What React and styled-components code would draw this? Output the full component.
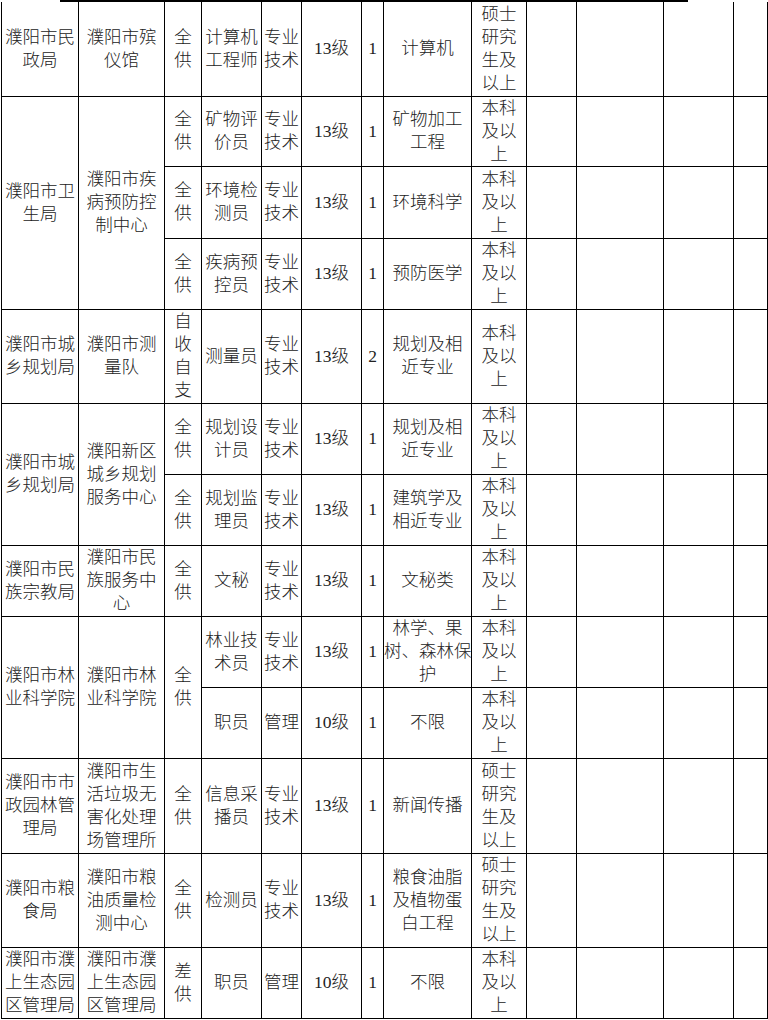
import React from "react";
import styled, { createGlobalStyle } from "styled-components";

const GlobalStyle = createGlobalStyle`
  html, body {
    margin: 0;
    padding: 0;
    background: #fff;
  }
  body {
    font-family: "Liberation Serif", "Noto Sans CJK SC", serif;
    color: #222;
  }
`;

const cols = [77, 86, 37, 60, 40, 60, 22, 88, 55, 50, 87, 70, 34];

const BK = "本科\n及以\n上";
const SS = "硕士\n研究\n生及\n以上";
const ZJ = "专业\n技术";

// [text, rowSpan]
const rows = [
  {
    h: 94,
    cells: ["濮阳市民\n政局", "濮阳市殡\n仪馆", "全\n供", "计算机\n工程师", ZJ, "13级", "1", "计算机", SS],
  },
  {
    h: 70,
    cells: [
      ["濮阳市卫\n生局", 3],
      ["濮阳市疾\n病预防控\n制中心", 3],
      "全\n供", "矿物评\n价员", ZJ, "13级", "1", "矿物加工\n工程", BK,
    ],
  },
  { h: 72, cells: ["全\n供", "环境检\n测员", ZJ, "13级", "1", "环境科学", BK] },
  { h: 71, cells: ["全\n供", "疾病预\n控员", ZJ, "13级", "1", "预防医学", BK] },
  {
    h: 94,
    cells: ["濮阳市城\n乡规划局", "濮阳市测\n量队", "自\n收\n自\n支", "测量员", ZJ, "13级", "2", "规划及相\n近专业", BK],
  },
  {
    h: 71,
    cells: [
      ["濮阳市城\n乡规划局", 2],
      ["濮阳新区\n城乡规划\n服务中心", 2],
      "全\n供", "规划设\n计员", ZJ, "13级", "1", "规划及相\n近专业", BK,
    ],
  },
  { h: 71, cells: ["全\n供", "规划监\n理员", ZJ, "13级", "1", "建筑学及\n相近专业", BK] },
  {
    h: 71,
    cells: ["濮阳市民\n族宗教局", "濮阳市民\n族服务中\n心", "全\n供", "文秘", ZJ, "13级", "1", "文秘类", BK],
  },
  {
    h: 71,
    cells: [
      ["濮阳市林\n业科学院", 2],
      ["濮阳市林\n业科学院", 2],
      ["全\n供", 2],
      "林业技\n术员", ZJ, "13级", "1", "林学、果\n树、森林保\n护", BK,
    ],
  },
  { h: 71, cells: ["职员", "管理", "10级", "1", "不限", BK] },
  {
    h: 95,
    cells: [
      "濮阳市市\n政园林管\n理局",
      "濮阳市生\n活垃圾无\n害化处理\n场管理所",
      "全\n供", "信息采\n播员", ZJ, "13级", "1", "新闻传播", SS,
    ],
  },
  {
    h: 94,
    cells: ["濮阳市粮\n食局", "濮阳市粮\n油质量检\n测中心", "全\n供", "检测员", ZJ, "13级", "1", "粮食油脂\n及植物蛋\n白工程", SS],
  },
  {
    h: 71,
    cells: ["濮阳市濮\n上生态园\n区管理局", "濮阳市濮\n上生态园\n区管理局", "差\n供", "职员", "管理", "10级", "1", "不限", BK],
  },
];

const Page = styled.div`
  width: 768px;
  height: 1020px;
  overflow: hidden;
  padding-left: 1px;
  box-sizing: border-box;
`;

const TopRule = styled.div`
  height: 2px;
  width: 628px;
  margin-left: 59px;
  background: #000;
`;

const Sheet = styled.table`
  border-collapse: collapse;
  table-layout: fixed;
  width: 766px;
`;

const Row = styled.tr`
  height: ${(p) => p.$h}px;
`;

const Cell = styled.td`
  border: 1px solid #000;
  border-top: ${(p) => (p.$first ? "none" : "1px solid #000")};
  padding: 0;
  text-align: center;
  vertical-align: middle;
  white-space: pre;
  font-size: 17.5px;
  line-height: 23px;
  font-weight: 300;
  overflow: visible;
`;

const EMPTY = 4;

export default function App() {
  return (
    <Page>
      <GlobalStyle />
      <TopRule />
      <Sheet>
        <colgroup>
          {cols.map((w, i) => (
            <col key={i} style={{ width: w }} />
          ))}
        </colgroup>
        <tbody>
          {rows.map((r, i) => (
            <Row key={i} $h={r.h}>
              {r.cells.map((c, j) => {
                const [text, rs] = Array.isArray(c) ? c : [c, 1];
                return (
                  <Cell key={j} rowSpan={rs} $first={i === 0}>
                    {text}
                  </Cell>
                );
              })}
              {Array.from({ length: EMPTY }).map((_, k) => (
                <Cell key={"e" + k} $first={i === 0} />
              ))}
            </Row>
          ))}
        </tbody>
      </Sheet>
    </Page>
  );
}
